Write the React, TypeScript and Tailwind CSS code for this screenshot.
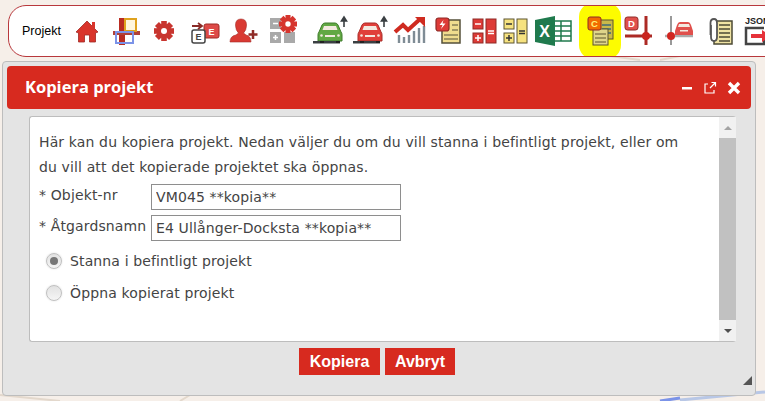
import type { ReactNode } from 'react'

function Icon({ w = 36, children }: { w?: number; children: ReactNode }) {
  return (
    <svg width={w} height="32" viewBox={`0 0 ${w} 32`} className="shrink-0">
      {children}
    </svg>
  )
}

function Gear({ cx, cy, r, fill = '#c9302c' }: { cx: number; cy: number; r: number; fill?: string }) {
  const teeth = [0, 45, 90, 135]
  return (
    <g>
      {teeth.map((a) => (
        <rect key={a} x={cx - r * 0.28} y={cy - r} width={r * 0.56} height={r * 2} fill={fill} transform={`rotate(${a} ${cx} ${cy})`} />
      ))}
      <circle cx={cx} cy={cy} r={r * 0.72} fill={fill} />
      <circle cx={cx} cy={cy} r={r * 0.3} fill="#fff" />
    </g>
  )
}

function Car({ fill, dark }: { fill: string; dark: string }) {
  return (
    <g>
      <path d="M8 17 L11 10 Q12 8 14 8 H24 Q26 8 27 10 L30 17 Q31 18 31 20 V26 H7 V20 Q7 18 8 17Z" fill={fill} stroke={dark} strokeWidth="1" />
      <path d="M11.500 15 L13 11 H25 L26.500 15Z" fill="#f3e9e0" />
      <rect x="14" y="20" width="10" height="2" fill="#f3e9e0" />
      <circle cx="10.500" cy="20.500" r="1.300" fill="#f3e9e0" />
      <circle cx="27.500" cy="20.500" r="1.300" fill="#f3e9e0" />
      <rect x="2" y="26" width="27" height="2.500" fill="#3a3f42" />
      <path d="M9 26 h4 v2 h-4z M25 26 h4 v2 h-4z" fill="#222" />
      <path d="M26 12 V4 M23.500 6 L26 2 L28.500 6Z" stroke="#3a3f42" strokeWidth="1.600" fill="#3a3f42" transform="translate(7 0)" />
    </g>
  )
}

function CalcCell({ x, y, w, h, fill, stroke, sign, signColor }: { x: number; y: number; w: number; h: number; fill: string; stroke: string; sign: string; signColor: string }) {
  const cx = x + w / 2
  const cy = y + h / 2
  return (
    <g>
      <rect x={x} y={y} width={w} height={h} fill={fill} stroke={stroke} strokeWidth="1" />
      {sign !== 'none' && <path d={`M${cx - 3} ${cy} H${cx + 3}`} stroke={signColor} strokeWidth="1.500" />}
      {sign === 'plus' && <path d={`M${cx} ${cy - 3} V${cy + 3}`} stroke={signColor} strokeWidth="1.500" />}
      {sign === 'eq' && <path d={`M${cx - 3} ${cy + 2.500} H${cx + 3}`} stroke={signColor} strokeWidth="1.500" />}
    </g>
  )
}

function Toolbar() {
  return (
    <div className="ml-2 h-[52px] mt-[5px] w-[800px] shrink-0 bg-white border border-[#b8383c] rounded-l-[18px] flex items-center pl-[13px] overflow-hidden">
      <span className="w-[51px] shrink-0 text-[12.5px] text-black font-['Liberation_Sans',sans-serif]">Projekt</span>
      <div className="flex items-center gap-[3px]">
        {/* hem */}
        <Icon w={28}>
          <path d="M3 17 L14 6 L25 17 L22.500 18 V27 H16.500 V20 H11.500 V27 H5.500 V18Z" fill="#d9342b" stroke="#9f2a25" strokeWidth="0.800" />
          <rect x="19" y="7" width="3" height="6" fill="#d9342b" />
        </Icon>
        {/* lager */}
        <Icon w={36}>
          <rect x="15" y="3" width="6" height="27" fill="#b92c22" />
          <rect x="9" y="16" width="30" height="4" fill="#b0413a" />
          <rect x="21" y="4" width="11" height="12" fill="#fff6dc" stroke="#dfa21e" strokeWidth="2" />
          <rect x="12" y="17" width="17" height="11" fill="none" stroke="#7b93e8" strokeWidth="2" />
        </Icon>
        {/* kugghjul */}
        <Icon w={42}>
          <Gear cx={21} cy={16} r={10} fill="#c8352f" />
        </Icon>
        {/* E E */}
        <Icon w={34}>
          <rect x="16" y="9" width="15" height="14" rx="2" fill="#dd4a47" stroke="#9f2a25" />
          <text x="23.500" y="20" fontSize="9" fontWeight="700" fill="#fff" textAnchor="middle" fontFamily="Liberation Sans">E</text>
          <rect x="4" y="15" width="13" height="13" rx="2" fill="#fff" stroke="#444" strokeWidth="1.500" />
          <text x="10.500" y="25" fontSize="9" fontWeight="700" fill="#444" textAnchor="middle" fontFamily="Liberation Sans">E</text>
          <path d="M4 11 H13 M10 8 L14 11 L10 14" stroke="#8a2b27" strokeWidth="1.800" fill="none" />
        </Icon>
        {/* person */}
        <Icon w={36}>
          <path d="M5 27 Q5 21 11 20 L13.500 18 Q10.500 15 10.500 10 Q10.500 4 16 4 Q21.500 4 21.500 10 Q21.500 15 18.500 18 L21 20 Q26 21 26 27Z" fill="#d93a33" stroke="#a52e29" strokeWidth="0.600" />
          <path d="M26 17 V26 M21.500 21.500 H30.500" stroke="#8f2b27" strokeWidth="2.500" transform="translate(2 -2)" />
        </Icon>
        {/* kalkyl med kugghjul */}
        <Icon w={44}>
          <rect x="6" y="3" width="11" height="11" fill="#a9a9a9" />
          <rect x="6" y="17" width="11" height="11" fill="#a9a9a9" />
          <rect x="20" y="17" width="11" height="11" fill="#a9a9a9" />
          <path d="M9 8.500 H14 M9 22.500 H14 M11.500 20 V25" stroke="#fff" strokeWidth="1.500" />
          <Gear cx={24} cy={9} r={9} fill="#d6352e" />
        </Icon>
        {/* bil grön */}
        <Icon w={37}>
          <Car fill="#62a844" dark="#3f7d2c" />
        </Icon>
        {/* bil röd */}
        <Icon w={37}>
          <Car fill="#e0403a" dark="#a82d29" />
        </Icon>
        {/* diagram */}
        <Icon w={38}>
          <path d="M8 20 v8 M13 22 v6 M18 20 v8 M23 16 v12 M28 13 v15 M33 11 v17" stroke="#7f8c95" strokeWidth="2.400" />
          <path d="M4 17 L12 10 L17 15 L28 5" stroke="#cf2b20" strokeWidth="4" fill="none" />
          <path d="M24 2 H34 V12Z" fill="#cf2b20" />
        </Icon>
        {/* blixt */}
        <Icon w={36}>
          <rect x="10" y="5" width="18" height="23" fill="#f0dc8e" stroke="#55503a" strokeWidth="1.500" />
          <path d="M20 10 H26 M20 15 H26 M12 20 H26 M12 24 H26" stroke="#55503a" strokeWidth="1" />
          <rect x="4" y="3" width="13" height="13" rx="2.500" fill="#dd3b37" stroke="#8f2b27" strokeWidth="1.200" />
          <path d="M11.500 5 L7.500 10 H10.500 L9 14 L13.500 8.500 H10.500Z" fill="#fff" />
        </Icon>
        {/* röd kalkyl */}
        <Icon w={28}>
          <CalcCell x={2} y={4} w={10} height-unused={0} h={10} fill="#dd3b37" stroke="#8f2b27" sign="minus" signColor="#fff" {...({} as object)} />
          <CalcCell x={2} y={18} w={10} h={10} fill="#dd3b37" stroke="#8f2b27" sign="plus" signColor="#fff" />
          <CalcCell x={15} y={4} w={10} h={24} fill="#dd3b37" stroke="#8f2b27" sign="eq" signColor="#fff" />
        </Icon>
        {/* gul kalkyl */}
        <Icon w={28}>
          <CalcCell x={2} y={4} w={10} h={10} fill="#f6e27f" stroke="#5c5530" sign="minus" signColor="#333" />
          <CalcCell x={2} y={18} w={10} h={10} fill="#f6e27f" stroke="#5c5530" sign="plus" signColor="#333" />
          <CalcCell x={15} y={4} w={10} h={24} fill="#f6e27f" stroke="#5c5530" sign="eq" signColor="#333" />
        </Icon>
        {/* excel */}
        <Icon w={40}>
          <rect x="18" y="6" width="20" height="20" fill="#fff" stroke="#1f7a4d" strokeWidth="1.500" />
          <path d="M18 11 H38 M18 16 H38 M18 21 H38 M28 6 V26" stroke="#1f7a4d" strokeWidth="1.500" />
          <path d="M2 5 L22 1 V31 L2 27Z" fill="#1f7a4d" />
          <text x="11.500" y="22" fontSize="16" fontWeight="700" fill="#fff" textAnchor="middle" fontFamily="Liberation Sans">X</text>
        </Icon>
        {/* kopiera, markerad */}
        <div className="relative w-[44px] h-[32px] shrink-0">
          <div className="absolute left-[3px] -top-[12px] w-[42px] h-[56px] bg-[#fdfc00] rounded-[14px]" />
          <svg width="44" height="32" viewBox="0 0 44 32" className="absolute left-[5px] top-0">
            <rect x="19" y="5" width="13" height="19" fill="#c9b94a" stroke="#5c5530" />
            <path d="M21 10 H30 M21 14 H30 M21 18 H30" stroke="#3f6b7a" strokeWidth="1.500" />
            <rect x="12" y="14" width="15" height="16" fill="#dfd58a" stroke="#5c5530" />
            <path d="M14 19 H25 M14 23 H25 M14 27 H25" stroke="#5c5530" />
            <rect x="7" y="2" width="13" height="13" rx="2" fill="#f26b00" stroke="#8f2b27" />
            <text x="13.500" y="12" fontSize="9.500" fontWeight="700" fill="#fff27a" textAnchor="middle" fontFamily="Liberation Sans">C</text>
          </svg>
        </div>
        {/* D */}
        <Icon w={36}>
          <rect x="2" y="2" width="13" height="13" rx="2.500" fill="#e0504c" stroke="#8f2b27" />
          <text x="8.500" y="12" fontSize="9.500" fontWeight="700" fill="#fff" textAnchor="middle" fontFamily="Liberation Sans">D</text>
          <path d="M23 1 V30 M2 21 H29" stroke="#ac2a25" strokeWidth="3" />
          <circle cx="23" cy="21" r="4" fill="#c9251f" />
        </Icon>
        {/* bil vid kors */}
        <Icon w={36}>
          <path d="M9 1 V30" stroke="#777" strokeWidth="1.500" />
          <path d="M3 21 H31" stroke="#aaa" strokeWidth="2.500" />
          <circle cx="9" cy="21" r="4" fill="#d1251f" />
          <path d="M13 16 L15 10 Q16 7 18 7 H26 Q28 7 29 10 L31 16 V20 H13Z" fill="#e0504c" />
          <path d="M16 12 L17 9 H27 L28 12Z" fill="#f3e9e0" />
          <rect x="18" y="15" width="8" height="1.500" fill="#f3e9e0" />
        </Icon>
        {/* gem */}
        <Icon w={38}>
          <rect x="13" y="6" width="18" height="23" fill="#efe3a4" stroke="#4c4a35" strokeWidth="1.500" />
          <path d="M18 10 H29 M18 14 H29 M18 18 H29 M18 22 H29 M18 26 H29" stroke="#4c4a35" strokeWidth="1.500" />
          <path d="M10 10 V22 Q10 26 13 26 Q16 26 16 22 V8 Q16 4 13 4 Q9.500 4 9.500 8 V20" stroke="#555" strokeWidth="1.800" fill="#fff" />
        </Icon>
        {/* json */}
        <Icon w={40}>
          <text x="3" y="9" fontSize="9" fontWeight="700" fill="#222" fontFamily="Liberation Sans">JSON</text>
          <path d="M22 13 H4 V29 H22 V25" stroke="#444" strokeWidth="2.500" fill="none" />
          <path d="M9 19 H20 V15 L29 21 L20 27 V23 H9Z" fill="#e6323a" />
        </Icon>
      </div>
    </div>
  )
}

function Scrollbar() {
  return (
    <div className="w-[17px] shrink-0 bg-[#f1f1f1] flex flex-col items-center">
      <div className="h-[21px] flex items-center justify-center">
        <div className="w-0 h-0 border-x-[4px] border-x-transparent border-b-[4px] border-b-[#a3a3a3]" />
      </div>
      <div className="w-full flex-1 bg-[#c1c1c1]" />
      <div className="h-[21px] flex items-center justify-center">
        <div className="w-0 h-0 border-x-[4px] border-x-transparent border-t-[4px] border-t-[#505050]" />
      </div>
    </div>
  )
}

function Field({ label, value }: { label: string; value: string }) {
  return (
    <div className="flex items-center h-[27px] mb-[4px]">
      <label className="w-[112px] shrink-0 pb-[2px]">* {label}</label>
      <input
        readOnly
        value={value}
        className="w-[250px] h-[26px] border border-[#8e8e8e] bg-white px-[4px] text-[#444] outline-none"
      />
    </div>
  )
}

function Radio({ label, checked }: { label: string; checked?: boolean }) {
  return (
    <div className="flex items-center h-[32px] pl-[7px]">
      <span className="w-[16px] h-[16px] rounded-full border border-[#c0c0c0] bg-[linear-gradient(#e2e2e2,#f5f5f5)] flex items-center justify-center shadow-[0_0_2px_#ddd]">
        {checked && <span className="w-[8px] h-[8px] rounded-full bg-[#777]" />}
      </span>
      <span className="ml-[8px]">{label}</span>
    </div>
  )
}

export default function App() {
  return (
    <div className="relative w-[765px] h-[401px] overflow-hidden bg-[#f6efe9]">
      {/* kartan bakom */}
      <svg className="absolute inset-0" width="765" height="401">
        <path d="M640 60 L610 56 M660 60 L690 54 M0 395 L60 401 M180 401 L190 395" stroke="#e3d8cc" strokeWidth="2" />
        <path d="M680 400 L765 392" stroke="#b8c7e6" strokeWidth="3" />
        <path d="M660 401 L680 398" stroke="#7b93e8" strokeWidth="3" />
      </svg>
      <div className="relative flex flex-col items-start font-['DejaVu_Sans',sans-serif]">
        <Toolbar />
        {/* dialog */}
        <div className="mt-[4px] ml-[2px] w-[754px] h-[335px] bg-[#e4e4e4] border border-[#bdbdbd] rounded-[4px] p-[4px] flex flex-col">
          <div className="h-[43px] shrink-0 rounded-[4px] bg-[#d72a1f] flex items-center pl-[18px] pr-[10px] text-white">
            <h1 className="text-[16.5px] font-bold font-['Open_Sans',sans-serif]">Kopiera projekt</h1>
            <div className="ml-auto flex items-center gap-[10px]">
              <svg width="12" height="12" viewBox="0 0 12 12"><rect x="1" y="5" width="10" height="2.500" fill="#fff" /></svg>
              <svg width="14" height="14" viewBox="0 0 14 14" fill="none" stroke="#fff" strokeWidth="1.200"><path d="M5 3 H2 V12 H11 V9 M7 7 L12 2 M8.500 1.500 H12.500 V5.500" /></svg>
              <svg width="14" height="14" viewBox="0 0 14 14" stroke="#fff" strokeWidth="3.400"><path d="M2 2 L12 12 M12 2 L2 12" /></svg>
            </div>
          </div>
          <div className="mt-[7px] ml-[22px] mr-[15px] h-[226px] shrink-0 bg-white border border-[#bdbdbd] border-r-0 rounded-[3px] flex text-[14px] tracking-[0.13px] text-[#444]">
            <div className="flex-1 pl-[9px] pt-[13px] pr-[20px]">
              <p className="leading-[25px] whitespace-nowrap">Här kan du kopiera projekt. Nedan väljer du om du vill stanna i befintligt projekt, eller om<br />du vill att det kopierade projektet ska öppnas.</p>
              <div className="mt-[3px]">
                <Field label="Objekt-nr" value="VM045 **kopia**" />
                <Field label="Åtgardsnamn" value="E4 Ullånger-Docksta **kopia**" />
              </div>
              <Radio label="Stanna i befintligt projekt" checked />
              <Radio label="Öppna kopierat projekt" />
            </div>
            <Scrollbar />
          </div>
          <div className="mt-[6px] flex justify-center gap-[5px] pr-[4px] text-white font-bold text-[16px] font-['Liberation_Sans',sans-serif]">
            <button className="h-[27px] w-[81px] bg-[#d72a1f]">Kopiera</button>
            <button className="h-[27px] w-[70px] bg-[#d72a1f]">Avbryt</button>
          </div>
          <svg className="absolute right-[13px] bottom-[11px]" width="9" height="9" viewBox="0 0 9 9"><path d="M9 0 V9 H0Z" fill="#555" /></svg>
        </div>
      </div>
    </div>
  )
}
